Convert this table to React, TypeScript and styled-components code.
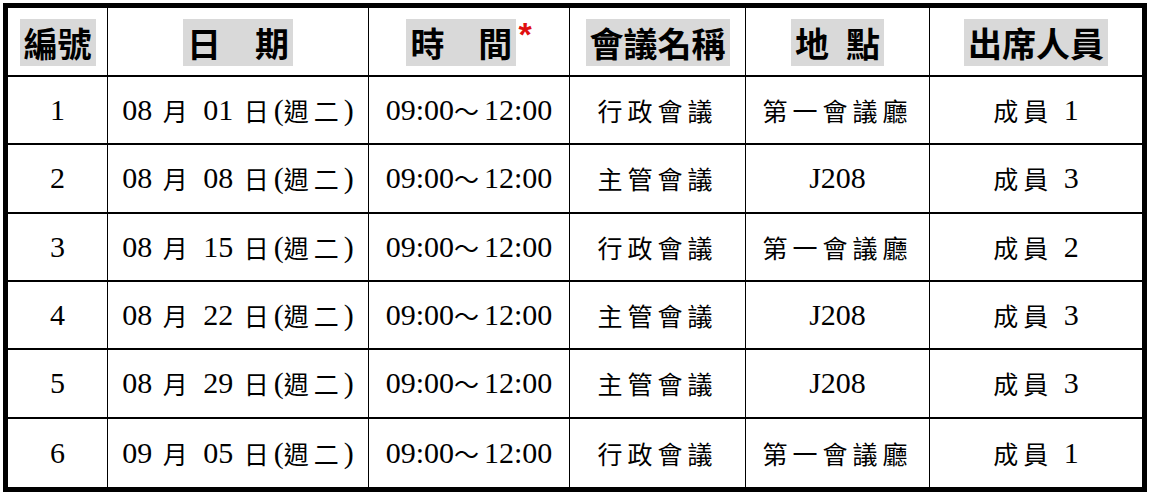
import styled, { createGlobalStyle } from 'styled-components';

const GlobalStyle = createGlobalStyle`
	html, body {
		margin: 0;
		padding: 0;
		background: #ffffff;
		color: #000000;
	}
`;

const Page = styled.div`
	padding: 3px 0 0 3px;
`;

const Grid = styled.div`
	display: grid;
	grid-template-columns: 100px 261px 201px 176px 184px 212px;
	grid-template-rows: 69px repeat(6, 68.33px);
	width: 1134px;
	border: 5px solid #000000;
`;

const Cell = styled.div<{ $lastCol?: boolean; $lastRow?: boolean }>`
	box-sizing: border-box;
	display: flex;
	align-items: center;
	justify-content: center;
	border-right: ${p => (p.$lastCol ? 'none' : '1px solid #000000')};
	border-bottom: ${p => (p.$lastRow ? 'none' : '2px solid #000000')};
	white-space: pre;
`;

const Latin = styled.span`
	font-family: "Liberation Serif", "DejaVu Serif", serif;
	font-size: 30px;
	word-spacing: 3px;
`;

const Han = styled.span`
	font-family: "Noto Sans CJK TC", sans-serif;
	font-size: 25px;
	letter-spacing: 5px;
`;

const HeadWrap = styled.span`
	display: inline-flex;
	align-items: flex-start;
	margin-top: 1px;
`;

const HeadLabel = styled.span`
	display: inline-flex;
	align-items: center;
	height: 47px;
	padding: 0 4px;
	background: #d9d9d9;
	font-family: "Noto Sans CJK TC", sans-serif;
	font-size: 34px;
	font-weight: 700;
	white-space: pre;
`;

const Star = styled.span`
	margin: -2px 0 0 2px;
	color: #e01010;
	font-family: "Liberation Sans", sans-serif;
	font-size: 34px;
	font-weight: 700;
	line-height: 1;
`;

const heads = ['編號', '日\u3000期', '時\u3000間', '會議名稱', '地\u2002點', '出席人員'];

const rows = [
	['1', '08 月 01 日(週二)', '09:00～12:00', '行政會議', '第一會議廳', '成員 1'],
	['2', '08 月 08 日(週二)', '09:00～12:00', '主管會議', 'J208', '成員 3'],
	['3', '08 月 15 日(週二)', '09:00～12:00', '行政會議', '第一會議廳', '成員 2'],
	['4', '08 月 22 日(週二)', '09:00～12:00', '主管會議', 'J208', '成員 3'],
	['5', '08 月 29 日(週二)', '09:00～12:00', '主管會議', 'J208', '成員 3'],
	['6', '09 月 05 日(週二)', '09:00～12:00', '行政會議', '第一會議廳', '成員 1'],
];

const HAN = /[\u3000-\u9fff\uff00-\uffef]/;

// mixed text: latin in serif, CJK runs in the CJK face
function Mixed({ text }: { text: string }) {
	const parts = text.split(/([\u3000-\u9fff\uff00-\uffef]+)/).filter(Boolean);
	return (
		<>
			{parts.map((part, i) => (HAN.test(part) ? <Han key={i}>{part}</Han> : <Latin key={i}>{part}</Latin>))}
		</>
	);
}

export default function App() {
	return (
		<Page>
			<GlobalStyle />
			<Grid>
				{heads.map((h, i) => (
					<Cell key={h} $lastCol={i === heads.length - 1}>
						<HeadWrap>
							<HeadLabel>{h}</HeadLabel>
							{i === 2 && <Star>*</Star>}
						</HeadWrap>
					</Cell>
				))}
				{rows.map((row, r) =>
					row.map((value, c) => (
						<Cell key={`${r}-${c}`} $lastCol={c === row.length - 1} $lastRow={r === rows.length - 1}>
							<Mixed text={value} />
						</Cell>
					))
				)}
			</Grid>
		</Page>
	);
}
